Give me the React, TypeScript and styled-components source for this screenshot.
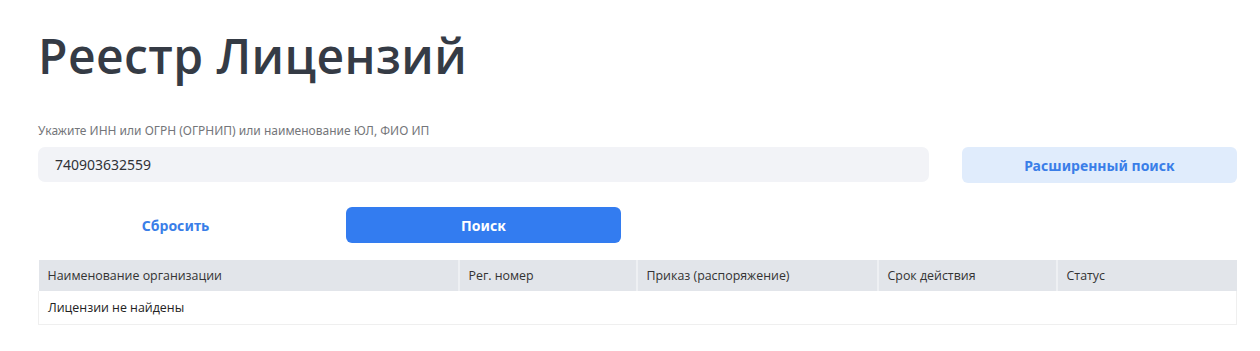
import React from "react";
import styled, { createGlobalStyle } from "styled-components";

const Global = createGlobalStyle`
  html, body { margin: 0; padding: 0; background: #fff; }
  body { font-family: "Noto Sans", "Open Sans", sans-serif; color: #333; }
  * { box-sizing: border-box; }
`;

const Page = styled.div`
  padding: 22px 23px 0 38px;
  width: 1260px;
`;

const Title = styled.h1`
  margin: 0;
  font-family: "Open Sans", sans-serif;
  font-weight: 600;
  font-size: 48px;
  line-height: 68px;
  letter-spacing: 0.4px;
  color: #353b45;
`;

const Label = styled.div`
  margin-top: 33px;
  font-family: "Noto Sans", sans-serif;
  font-size: 12px;
  line-height: 16px;
  color: #74767a;
`;

const Grid = styled.div`
  display: grid;
  grid-template-columns: repeat(4, 275px);
  column-gap: 33px;
  row-gap: 24px;
  margin-top: 8px;
`;

const Input = styled.input`
  grid-column: span 3;
  height: 35px;
  border: none;
  border-radius: 7px;
  background: #f2f3f7;
  padding: 0 17px;
  font-family: "Noto Sans", sans-serif;
  font-size: 14px;
  color: #2f3237;
  outline: none;
`;

const Button = styled.button<{ $variant: "primary" | "soft" | "link" }>`
  height: 36px;
  border: none;
  border-radius: 6px;
  font-family: "Noto Sans", sans-serif;
  font-weight: 700;
  font-size: 14px;
  cursor: pointer;
  background: ${(p) =>
    p.$variant === "primary" ? "#337cf0" : p.$variant === "soft" ? "#e0ecfc" : "transparent"};
  color: ${(p) => (p.$variant === "primary" ? "#ffffff" : "#3a7ee8")};
`;

const Table = styled.table`
  margin-top: 17px;
  width: 1199px;
  border-collapse: collapse;
  table-layout: fixed;
  font-family: "Open Sans", sans-serif;
  font-size: 12.4px;
`;

const Th = styled.th<{ $w?: number }>`
  width: ${(p) => (p.$w ? `${p.$w}px` : "auto")};
  height: 31px;
  background: #e2e5ea;
  text-align: left;
  font-weight: 400;
  color: #333;
  padding: 0 9px;
  border-left: 2px solid #eef0f3;
  &:first-child { border-left: none; }
`;

const Td = styled.td`
  height: 33px;
  padding: 0 9px;
  color: #222;
  border: 1px solid #efefef;
  border-top: none;
`;

export default function App() {
  return (
    <>
      <Global />
      <Page>
        <Title>Реестр Лицензий</Title>
        <Label>Укажите ИНН или ОГРН (ОГРНИП) или наименование ЮЛ, ФИО ИП</Label>
        <Grid>
          <Input defaultValue="740903632559" />
          <Button $variant="soft">Расширенный поиск</Button>
          <Button $variant="link">Сбросить</Button>
          <Button $variant="primary">Поиск</Button>
        </Grid>
        <Table>
          <thead>
            <tr>
              <Th $w={420}>Наименование организации</Th>
              <Th $w={178}>Рег. номер</Th>
              <Th $w={241}>Приказ (распоряжение)</Th>
              <Th $w={179}>Срок действия</Th>
              <Th>Статус</Th>
            </tr>
          </thead>
          <tbody>
            <tr>
              <Td colSpan={5}>Лицензии не найдены</Td>
            </tr>
          </tbody>
        </Table>
      </Page>
    </>
  );
}
